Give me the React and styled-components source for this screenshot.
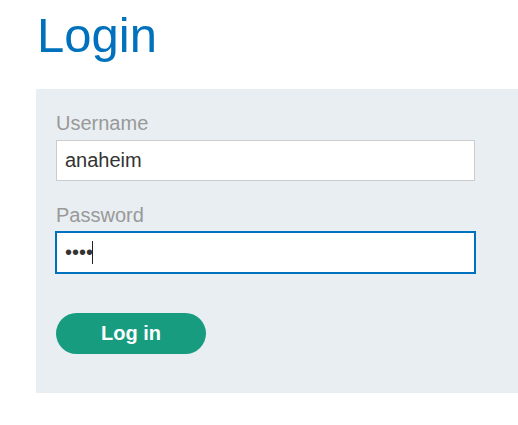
import React from "react"
import styled, { createGlobalStyle } from "styled-components"

const GlobalStyle = createGlobalStyle`
  body {
    margin: 0;
    background: #fff;
    font-family: "Liberation Sans", Arial, sans-serif;
  }
`;

const Page = styled.div`
  padding: 11px 0 0 36px;
  overflow: hidden;
`;

const Title = styled.h1`
  margin: 0 0 29px 1px;
  font-size: 49px;
  line-height: 49px;
  font-weight: 400;
  color: #0071bc;
`;

const Panel = styled.form`
  background-color: #e8eef1;
  padding: 22px 0 39px 20px;
  display: flex;
  flex-direction: column;
`;

const Field = styled.label`
  display: flex;
  flex-direction: column;
  gap: 5px;
  margin-bottom: ${(props) => props.last ? `40px` : `22px`};
`;

const Label = styled.span`
  font-size: 20px;
  line-height: 24px;
  color: #999;
`;

const InputWrap = styled.div`
  position: relative;
  width: 419px;
`;

const Input = styled.input`
  box-sizing: border-box;
  width: 419px;
  height: 41px;
  margin: 0;
  padding: 0 8px;
  font-family: inherit;
  font-size: 20px;
  color: #333;
  background: #fff;
  border: 1px solid ${(props) => props.focused ? `#0071bc` : `#ccc`};
  border-radius: 0;
  outline: none;
  caret-color: ${(props) => props.focused ? `transparent` : `#333`};
  ${(props) => props.focused && `
    box-shadow: 0 0 0 1px #0071bc;
  `}
`;

// text cursor drawn over the focused field
const Caret = styled.span`
  position: absolute;
  left: 36px;
  top: 9px;
  width: 1px;
  height: 23px;
  background-color: #222;
  pointer-events: none;
`;

const Button = styled.button`
  width: 150px;
  height: 41px;
  border: none;
  border-radius: 21px;
  background-color: #179c7f;
  color: #fff;
  font-family: inherit;
  font-size: 20px;
  font-weight: 700;
  cursor: pointer;
`;

export default function App() {
  return (
    <>
      <GlobalStyle />
      <Page>
        <Title>Login</Title>
        <Panel onSubmit={(e) => e.preventDefault()}>
          <Field>
            <Label>Username</Label>
            <InputWrap>
              <Input type="text" defaultValue="anaheim" />
            </InputWrap>
          </Field>
          <Field last>
            <Label>Password</Label>
            <InputWrap>
              <Input type="password" defaultValue="abcd" focused />
              <Caret />
            </InputWrap>
          </Field>
          <div>
            <Button type="submit">Log in</Button>
          </div>
        </Panel>
      </Page>
    </>
  )
}
